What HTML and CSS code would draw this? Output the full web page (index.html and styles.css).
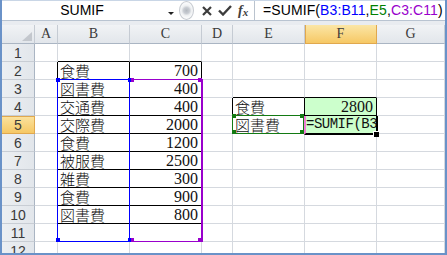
FILE: index.html
```html
<!DOCTYPE html>
<html lang="ja">
<head>
    <meta charset="UTF-8">
    <title>SUMIF</title>
    <link rel="stylesheet" href="styles.css">
</head>
<body>
    <div class="window">
        <!-- 数式バー -->
        <div class="formula-bar">
            <div class="name-box">SUMIF</div>
            <div class="name-drop"></div>
            <div class="grip"></div>
            <div class="fx-buttons">
                <svg class="icon-cancel" width="10" height="10" viewBox="0 0 10 10">
                    <path d="M1 1 L9 9 M9 1 L1 9" stroke="#3c3c3c" stroke-width="2.2" fill="none"/>
                </svg>
                <svg class="icon-enter" width="14" height="11" viewBox="0 0 14 11">
                    <path d="M1 5.5 L5 9.5 L13 1" stroke="#3c3c3c" stroke-width="2.4" fill="none"/>
                </svg>
                <span class="fx">f<span class="fx-x">x</span></span>
            </div>
            <div class="formula-input">=SUMIF(<span class="ref-b">B3:B11</span>,<span class="ref-e">E5</span>,<span class="ref-c">C3:C11</span>)</div>
        </div>
        <div class="band"></div>

        <!-- シート -->
        <div class="sheet">
            <div class="hd corner"></div><div class="hd">A</div><div class="hd">B</div><div class="hd">C</div><div class="hd">D</div><div class="hd">E</div><div class="hd hd-sel">F</div><div class="hd">G</div>

            <div class="rh">1</div><div class="c"></div><div class="c kb"></div><div class="c kb"></div><div class="c"></div><div class="c"></div><div class="c"></div><div class="c"></div>
            <div class="rh">2</div><div class="c kr"></div><div class="c kr kb">食費</div><div class="c kr kb num">700</div><div class="c"></div><div class="c"></div><div class="c"></div><div class="c"></div>
            <div class="rh">3</div><div class="c kr"></div><div class="c kr kb">図書費</div><div class="c kr kb num">400</div><div class="c"></div><div class="c kb"></div><div class="c kb"></div><div class="c"></div>
            <div class="rh">4</div><div class="c kr"></div><div class="c kr kb">交通費</div><div class="c kr kb num">400</div><div class="c kr"></div><div class="c kr kb">食費</div><div class="c kr kb num fill">2800</div><div class="c"></div>
            <div class="rh rh-sel">5</div><div class="c kr"></div><div class="c kr kb">交際費</div><div class="c kr kb num">2000</div><div class="c kr"></div><div class="c kr kb">図書費</div><div class="c kr kb fill edit">=SUMIF(B3</div><div class="c"></div>
            <div class="rh">6</div><div class="c kr"></div><div class="c kr kb">食費</div><div class="c kr kb num">1200</div><div class="c"></div><div class="c"></div><div class="c"></div><div class="c"></div>
            <div class="rh">7</div><div class="c kr"></div><div class="c kr kb">被服費</div><div class="c kr kb num">2500</div><div class="c"></div><div class="c"></div><div class="c"></div><div class="c"></div>
            <div class="rh">8</div><div class="c kr"></div><div class="c kr kb">雑費</div><div class="c kr kb num">300</div><div class="c"></div><div class="c"></div><div class="c"></div><div class="c"></div>
            <div class="rh">9</div><div class="c kr"></div><div class="c kr kb">食費</div><div class="c kr kb num">900</div><div class="c"></div><div class="c"></div><div class="c"></div><div class="c"></div>
            <div class="rh">10</div><div class="c kr"></div><div class="c kr kb">図書費</div><div class="c kr kb num">800</div><div class="c"></div><div class="c"></div><div class="c"></div><div class="c"></div>
            <div class="rh">11</div><div class="c"></div><div class="c"></div><div class="c"></div><div class="c"></div><div class="c"></div><div class="c"></div><div class="c"></div>
            <div class="rh">12</div><div class="c"></div><div class="c"></div><div class="c"></div><div class="c"></div><div class="c"></div><div class="c"></div><div class="c"></div>

            <!-- 参照範囲の枠 -->
            <div class="range range-c"></div>
            <div class="range range-b"></div>
            <div class="range range-e"></div>
            <div class="active-cell"></div>
            <div class="fill-handle"></div>

            <div class="handle h-b" style="left:54px;top:53px"></div>
            <div class="handle h-b" style="left:126px;top:53px"></div>
            <div class="handle h-b" style="left:54px;top:213px"></div>
            <div class="handle h-b" style="left:126px;top:213px"></div>
            <div class="handle h-c h-thin" style="left:129px;top:53px"></div>
            <div class="handle h-c" style="left:196px;top:53px"></div>
            <div class="handle h-c h-thin" style="left:129px;top:213px"></div>
            <div class="handle h-c" style="left:196px;top:213px"></div>
            <div class="handle h-e" style="left:230px;top:89px"></div>
            <div class="handle h-e" style="left:298px;top:89px"></div>
            <div class="handle h-e" style="left:230px;top:105px"></div>
            <div class="handle h-e" style="left:298px;top:105px"></div>
        </div>
    </div>
</body>
</html>
```

FILE: styles.css
```css
* {
    margin: 0;
    padding: 0;
    box-sizing: border-box;
}

body {
    width: 447px;
    height: 255px;
    overflow: hidden;
    background: #fff;
    font-family: "Liberation Sans", Arial, sans-serif;
    color: #000;
}

.window {
    width: 447px;
    height: 255px;
    border: 2px solid #6a92c8;
    border-top: none;
    display: flex;
    flex-direction: column;
    background: #fff;
}

/* 数式バー */
.formula-bar {
    height: 21px;
    display: flex;
    border-top: 1px solid #c9d6e6;
    border-bottom: 1px solid #b9c4d1;
    background: #fff;
}

.name-box {
    width: 160px;
    text-align: center;
    font-size: 14px;
    line-height: 19px;
}

.name-drop {
    width: 17px;
    display: flex;
    justify-content: center;
    padding-top: 11px;
}

.name-drop::after {
    content: "";
    border-left: 3px solid transparent;
    border-right: 3px solid transparent;
    border-top: 3px solid #222;
    height: 0;
}

.grip {
    width: 15px;
    height: 19px;
    border-radius: 50%;
    border: 1px solid #c6cad0;
    background: radial-gradient(circle, #b4b9c0 0, #c8ccd2 3px, #eef0f2 5px, #f8f9fa 7px);
}

.fx-buttons {
    width: 60px;
    display: flex;
    align-items: center;
    padding-left: 8px;
}

.icon-enter {
    margin-left: 6px;
}

.fx {
    margin-left: 6px;
    font-family: "Liberation Serif", serif;
    font-style: italic;
    font-weight: bold;
    font-size: 14px;
    color: #404040;
    line-height: 19px;
}

.fx-x {
    font-size: 11px;
    position: relative;
    top: 1px;
}

.formula-input {
    flex: 1;
    border-left: 1px solid #bac3ce;
    padding-left: 8px;
    font-size: 14px;
    letter-spacing: 0.1px;
    line-height: 19px;
    white-space: nowrap;
    overflow: hidden;
}

.ref-b { color: #0000ff; }
.ref-e { color: #008000; }
.ref-c { color: #9900cc; }

.band {
    height: 4px;
    background: #e9ecf0;
}

/* シート */
.sheet {
    position: relative;
    flex: 1;
    display: grid;
    grid-template-columns: 33px 23px 72px 72px 31px 72px 72px 1fr;
    grid-template-rows: 19px repeat(12, 18px);
    overflow: hidden;
}

.hd {
    background: linear-gradient(#f1f3f5, #e2e6eb);
    border-right: 1px solid #c5cbd3;
    border-bottom: 1px solid #aab5c3;
    text-align: center;
    font-family: "Liberation Serif", serif;
    font-size: 14px;
    line-height: 18px;
    color: #3a3a3a;
}

.hd-sel {
    background: linear-gradient(#fbe6a6, #f6c865);
    border-right-color: #e0a84e;
    border-bottom-color: #e0a84e;
    box-shadow: inset 1px 0 0 #e0a84e;
}

.corner {
    position: relative;
}

.corner::after {
    content: "";
    position: absolute;
    right: 2px;
    bottom: 2px;
    border-left: 10px solid transparent;
    border-bottom: 9px solid #c3c7cd;
}

.rh {
    background: linear-gradient(90deg, #eceff2, #e2e6eb);
    border-right: 1px solid #aab5c3;
    border-bottom: 1px solid #c8cdd4;
    text-align: center;
    font-size: 14px;
    line-height: 18px;
    color: #3a3a3a;
}

.rh-sel {
    background: linear-gradient(#fbe3a0, #f6c865);
    border-right-color: #e0a84e;
    border-bottom-color: #e0a84e;
    box-shadow: inset 0 1px 0 #e0a84e;
}

.c {
    border-right: 1px solid #d5d9df;
    border-bottom: 1px solid #d5d9df;
    padding: 0 2px;
    font-family: "Noto Sans CJK JP", sans-serif;
    font-weight: 300;
    font-size: 15px;
    line-height: 17px;
    color: #111;
    white-space: nowrap;
    overflow: hidden;
}

.kr { border-right-color: #000; }
.kb { border-bottom-color: #000; }

.num {
    text-align: right;
    padding-right: 3px;
    font-family: "Liberation Serif", serif;
    font-weight: normal;
    font-size: 16px;
}

.fill {
    background: #ccffcc;
}

.edit {
    padding-left: 1px;
    font-family: "Liberation Mono", monospace;
    font-weight: normal;
    font-size: 14px;
    letter-spacing: -0.5px;
}

/* 参照範囲 */
.range {
    position: absolute;
    border: 1px solid;
}

.range-b {
    left: 55px;
    top: 54px;
    width: 73px;
    height: 163px;
    border-color: #0000ff;
}

.range-c {
    left: 127px;
    top: 54px;
    width: 74px;
    height: 163px;
    border-color: #9900cc;
    border-right-width: 2px;
}

.range-e {
    left: 230px;
    top: 90px;
    width: 72px;
    height: 19px;
    border-color: #137a13;
}

.active-cell {
    position: absolute;
    left: 302px;
    top: 91px;
    width: 74px;
    height: 19px;
    border-left: 2px solid #f27ad6;
    border-right: 2px solid #000;
    border-bottom: 2px solid #000;
}

.fill-handle {
    position: absolute;
    left: 371px;
    top: 106px;
    width: 6px;
    height: 6px;
    background: #000;
    border-left: 1px solid #fff;
    border-top: 1px solid #fff;
}

.handle {
    position: absolute;
    width: 4px;
    height: 4px;
}

.h-thin { width: 3px; }
.h-b { background: #0000ff; }
.h-c { background: #9900cc; }
.h-e { background: #137a13; }
```
